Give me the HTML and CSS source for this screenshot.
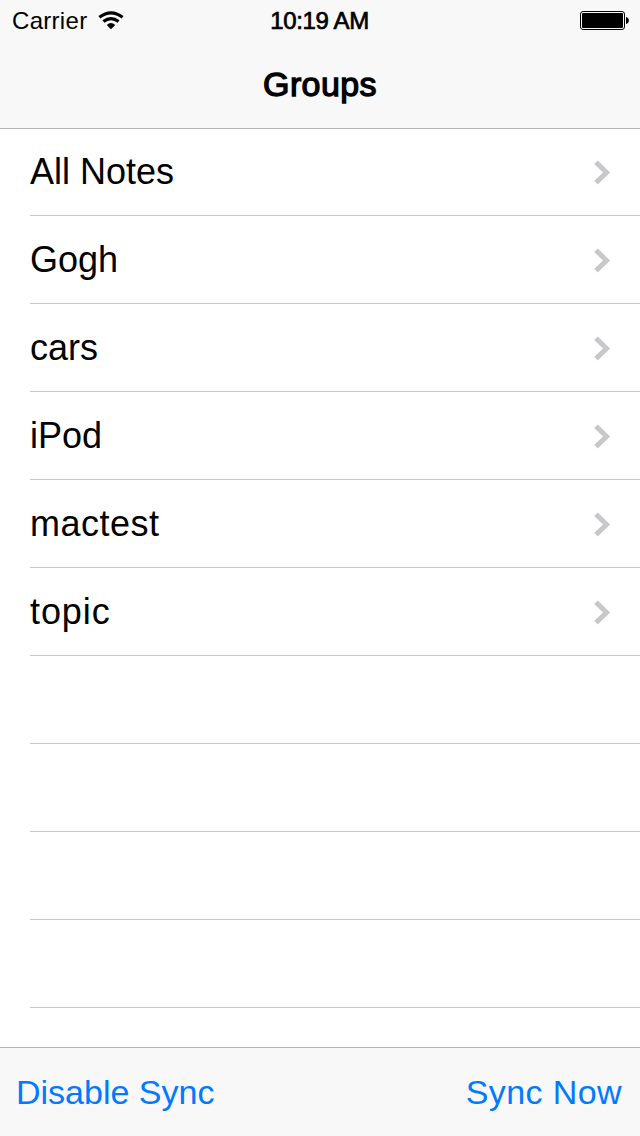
FILE: index.html
```html
<!DOCTYPE html>
<html lang="en">
<head>
<meta charset="utf-8">
<title>Groups</title>
<link rel="stylesheet" href="styles.css">
</head>
<body>
<div class="screen">
  <header class="header">
    <div class="status">
      <div class="carrier"><span class="carrier-name">Carrier</span>
        <svg class="wifi" width="26" height="20" viewBox="0 0 26 20" fill="none" stroke="#000"><path d="M1.400 6.300Q13 -2.700 24.600 6.300" stroke-width="3.100"/><path d="M5.400 10.500Q13 4.700 20.600 10.500" stroke-width="3.100"/><path d="M8.800 14Q13 10.200 17.200 14L13 18.200Z" fill="#000" stroke="none"/></svg>
      </div>
      <span class="clock">10:19 AM</span>
      <svg class="battery" width="50" height="20" viewBox="0 0 50 20"><rect x=".5" y=".5" width="44" height="18" rx="2.6" fill="none" stroke="#000"/><rect x="2" y="2" width="41" height="15" rx="1" fill="#000"/><path d="M46 6C49.800 6.500 49.800 12.500 46 13Z" fill="#000"/></svg>
    </div>
    <h1 class="title">Groups</h1>
  </header>
  <ul class="list">
    <li class="row first"><span class="label">All Notes</span><svg class="chevron" width="18" height="26" viewBox="0 0 18 26"><path d="M2 2.200L12.500 12.500L2 22.800"/></svg></li>
    <li class="row"><span class="label">Gogh</span><svg class="chevron" width="18" height="26" viewBox="0 0 18 26"><path d="M2 2.200L12.500 12.500L2 22.800"/></svg></li>
    <li class="row"><span class="label">cars</span><svg class="chevron" width="18" height="26" viewBox="0 0 18 26"><path d="M2 2.200L12.500 12.500L2 22.800"/></svg></li>
    <li class="row"><span class="label">iPod</span><svg class="chevron" width="18" height="26" viewBox="0 0 18 26"><path d="M2 2.200L12.500 12.500L2 22.800"/></svg></li>
    <li class="row"><span class="label mactest">mactest</span><svg class="chevron" width="18" height="26" viewBox="0 0 18 26"><path d="M2 2.200L12.500 12.500L2 22.800"/></svg></li>
    <li class="row"><span class="label topic">topic</span><svg class="chevron" width="18" height="26" viewBox="0 0 18 26"><path d="M2 2.200L12.500 12.500L2 22.800"/></svg></li>
    <li class="row"></li>
    <li class="row"></li>
    <li class="row"></li>
    <li class="row"></li>
  </ul>
  <footer class="toolbar">
    <span class="action">Disable Sync</span>
    <span class="action now">Sync Now</span>
  </footer>
</div>
</body>
</html>
```
FILE: styles.css
```css
* { box-sizing: border-box; }
body { margin: 0; }
.screen {
  width: 640px;
  height: 1136px;
  display: flex;
  flex-direction: column;
  overflow: hidden;
  background: #fff;
  color: #000;
  font-family: "Liberation Sans", Arial, sans-serif;
}
.header {
  flex: none;
  height: 129px;
  background: #f8f8f8;
  border-bottom: 1px solid #b2b2b2;
}
.status {
  display: grid;
  grid-template-columns: 1fr auto 1fr;
  height: 40px;
  padding: 0 10px 0 12px;
  font-size: 24px;
  line-height: 42px;
}
.carrier { display: flex; }
.carrier-name { letter-spacing: 0.3px; }
.wifi { margin: 11px 0 0 10.5px; }
.clock {
  padding-right: 3px;
  letter-spacing: -0.35px;
  -webkit-text-stroke: 0.7px #000;
}
.battery { justify-self: end; margin-top: 11px; }
.title {
  margin: 0;
  padding-top: 24px;
  text-align: center;
  font-size: 34px;
  line-height: 40px;
  font-weight: 400;
  letter-spacing: 0.4px;
  -webkit-text-stroke: 1.3px #000;
}
.list {
  flex: 1;
  margin: 0;
  padding: 0 0 0 30px;
  list-style: none;
}
.row {
  display: flex;
  justify-content: space-between;
  height: 88px;
  padding: 23px 28px 0 0;
  border-bottom: 1px solid #c8c7cc;
}
.first { height: 87px; padding-top: 22px; }
.label { font-size: 36px; line-height: 42px; }
.mactest { letter-spacing: 0.5px; }
.topic { letter-spacing: 0.9px; }
.chevron {
  margin-top: 9px;
  fill: none;
  stroke: #c7c7cc;
  stroke-width: 5;
}
.toolbar {
  flex: none;
  display: flex;
  justify-content: space-between;
  height: 89px;
  padding: 24px 18px 0 16px;
  background: #f8f8f8;
  border-top: 1px solid #b2b2b2;
  color: #007aff;
  font-size: 34px;
  line-height: 40px;
}
.now { letter-spacing: 0.4px; }
```
